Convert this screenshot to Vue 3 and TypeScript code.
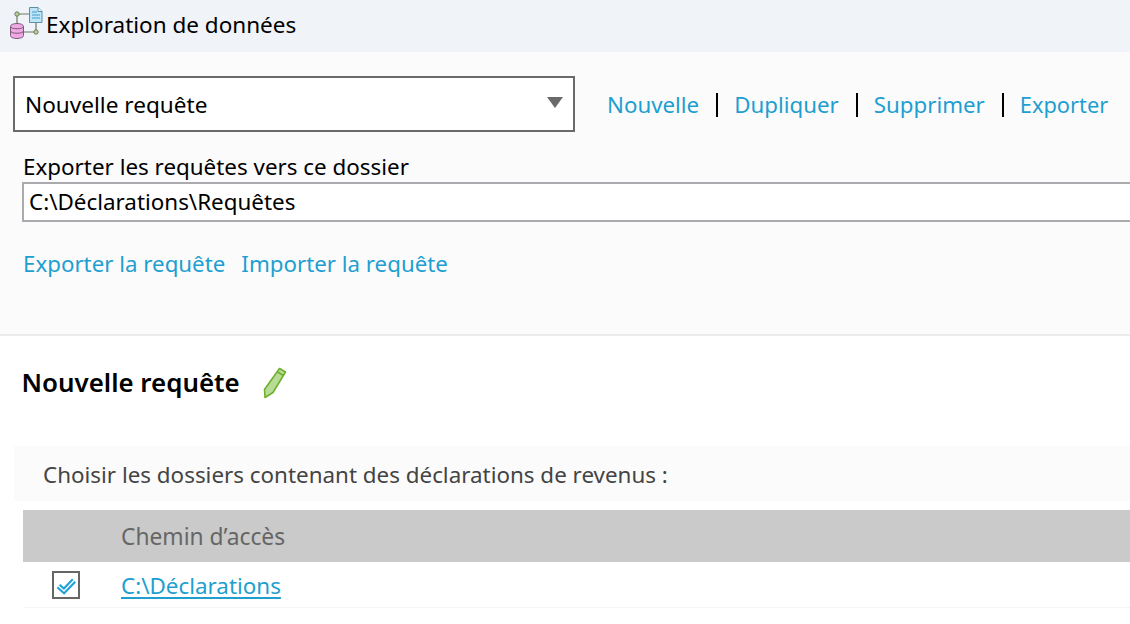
<script setup lang="ts">
const actions: string[] = ['Nouvelle', 'Dupliquer', 'Supprimer', 'Exporter']
</script>

<template>
  <div class="page">
    <header class="title-bar">
      <svg class="app-icon" width="46" height="52" viewBox="0 0 46 52">
        <path d="M17 14H29M17 14V24M24 32H36V23" fill="none" stroke="#6f7a66" stroke-width="1.200" />
        <circle cx="17" cy="14" r="2.200" fill="#b9cf9a" stroke="#6f7d5f" />
        <circle cx="36" cy="32" r="2.200" fill="#b9cf9a" stroke="#6f7d5f" />
        <path d="M29.500 7.500H38L42 11.500V22.500H29.500Z" fill="#bfe5f7" stroke="#5d8fa8" />
        <path d="M38 7.500V11.500H42" fill="#e8f6fd" stroke="#5d8fa8" />
        <path d="M32 12H37M32 15H40M32 18H40" stroke="#3f9bd0" stroke-width="1" />
        <path d="M10.500 26.500C10.500 22.500 23.500 22.500 23.500 26.500V35.500C23.500 39.500 10.500 39.500 10.500 35.500Z" fill="#f0a8e4" stroke="#7c5a78" />
        <path d="M10.500 26.500C10.500 29.500 23.500 29.500 23.500 26.500M10.500 31C10.500 34 23.500 34 23.500 31" fill="none" stroke="#7c5a78" />
      </svg>
      <span class="title-text">Exploration de données</span>
    </header>

    <section class="panel">
      <div class="toolbar">
        <div class="select">
          <span class="select-text">Nouvelle requête</span>
          <i class="caret"></i>
        </div>
        <nav class="actions">
          <a v-for="a in actions" :key="a" class="action">{{ a }}</a>
        </nav>
      </div>
      <label class="folder-label">Exporter les requêtes vers ce dossier</label>
      <div class="folder-input">C:\Déclarations\Requêtes</div>
      <div class="links">
        <a>Exporter la requête</a>
        <a>Importer la requête</a>
      </div>
    </section>

    <main class="content">
      <div class="heading">
        <h1>Nouvelle requête</h1>
        <svg width="24" height="32" viewBox="0 0 24 32">
          <path d="M16.500 1.500L22.500 5L10 25.500L2 30.500L1.500 22.500Z" fill="#b8dc96" stroke="#6eb02e" stroke-width="1.600" stroke-linejoin="round" />
          <path d="M14.500 5L20.500 8.500" stroke="#6eb02e" stroke-width="1.600" />
        </svg>
      </div>
      <div class="prompt">Choisir les dossiers contenant des déclarations de revenus :</div>
      <div class="table-head">
        <span class="path-col">Chemin d’accès</span>
      </div>
      <div class="table-row">
        <span class="check">
          <svg width="24" height="24" viewBox="0 0 24 24">
            <path d="M4.500 13L10 18L20 7.500" fill="none" stroke="#1ea0d6" stroke-width="5.500" />
            <path d="M4.500 13L10 18L20 7.500" fill="none" stroke="#eef9fd" stroke-width="1.600" />
          </svg>
        </span>
        <a class="path-link">C:\Déclarations</a>
      </div>
    </main>
  </div>
</template>

<style>
html, body { margin: 0; padding: 0; background: #fff; }
</style>

<style scoped>
.page {
  width: 1130px;
  height: 624px;
  overflow: hidden;
  font-family: "Noto Sans", "Open Sans", sans-serif;
  font-size: 22.400px;
  color: #000;
  background: #fff;
}
.title-bar {
  height: 52px;
  background: #f0f3f8;
  display: flex;
  align-items: center;
  font-size: 22.500px;
}
.app-icon { flex: none; }
.title-text { margin-top: -3px; }
.panel {
  height: 284px;
  box-sizing: border-box;
  background: #fbfbfc;
  border-bottom: 2px solid #ececec;
  padding: 24px 0 0 13px;
}
.toolbar { display: flex; align-items: center; }
.select {
  width: 562px;
  height: 56px;
  box-sizing: border-box;
  border: 2px solid #6a6a6a;
  background: #fff;
  display: flex;
  align-items: center;
  justify-content: space-between;
  padding: 0 10px;
  flex: none;
}
.select-text { font-size: 22.600px; }
.caret {
  border-left: 8px solid transparent;
  border-right: 8px solid transparent;
  border-top: 11px solid #6a6a6a;
  margin-top: -4px;
}
.actions { display: flex; margin: 2px 0 0 32px; color: #1e9fd0; font-size: 22.300px; }
.action { line-height: 24px; padding: 0 17px 0 16px; border-left: 2px solid #000; white-space: nowrap; }
.action:first-child { padding-left: 0; border-left: none; }
.action:last-child { font-size: 21.800px; }
.folder-label { display: block; margin: 21px 0 0 10px; line-height: 28px; }
.folder-input {
  margin: 1px -20px 0 9px;
  height: 40px;
  box-sizing: border-box;
  border: 2px solid #aaaaaf;
  background: #fff;
  padding-left: 5px;
  line-height: 35px;
  white-space: nowrap;
}
.links { display: flex; gap: 16px; margin: 26px 0 0 10px; color: #1e9fd0; line-height: 32px; font-size: 22.300px; }
.heading { display: flex; align-items: center; gap: 23px; margin: 29px 0 0 21.500px; height: 36px; }
.heading h1 { margin: -2px 0 0; font-size: 25.900px; font-weight: 600; line-height: 36px; }
.prompt {
  margin: 45px 0 0 14px;
  height: 55px;
  line-height: 57px;
  background: #fbfbfb;
  padding-left: 29px;
  color: #444;
  overflow: hidden;
}
.table-head {
  margin: 9px 0 0 23px;
  height: 52px;
  background: #cacaca;
  display: flex;
  align-items: center;
  padding-left: 98px;
  color: #666;
  font-size: 22.800px;
}
.table-row {
  margin-left: 23px;
  height: 45px;
  display: flex;
  align-items: center;
  border-bottom: 1px solid #f5f5f5;
}
.check {
  margin-left: 29px;
  width: 28px;
  height: 28px;
  box-sizing: border-box;
  border: 2px solid #666;
  display: flex;
  align-items: center;
  justify-content: center;
  flex: none;
}
.path-link { margin: 2px 0 0 41px; color: #1e9fd0; text-decoration: underline; text-underline-offset: 3px; }
</style>
